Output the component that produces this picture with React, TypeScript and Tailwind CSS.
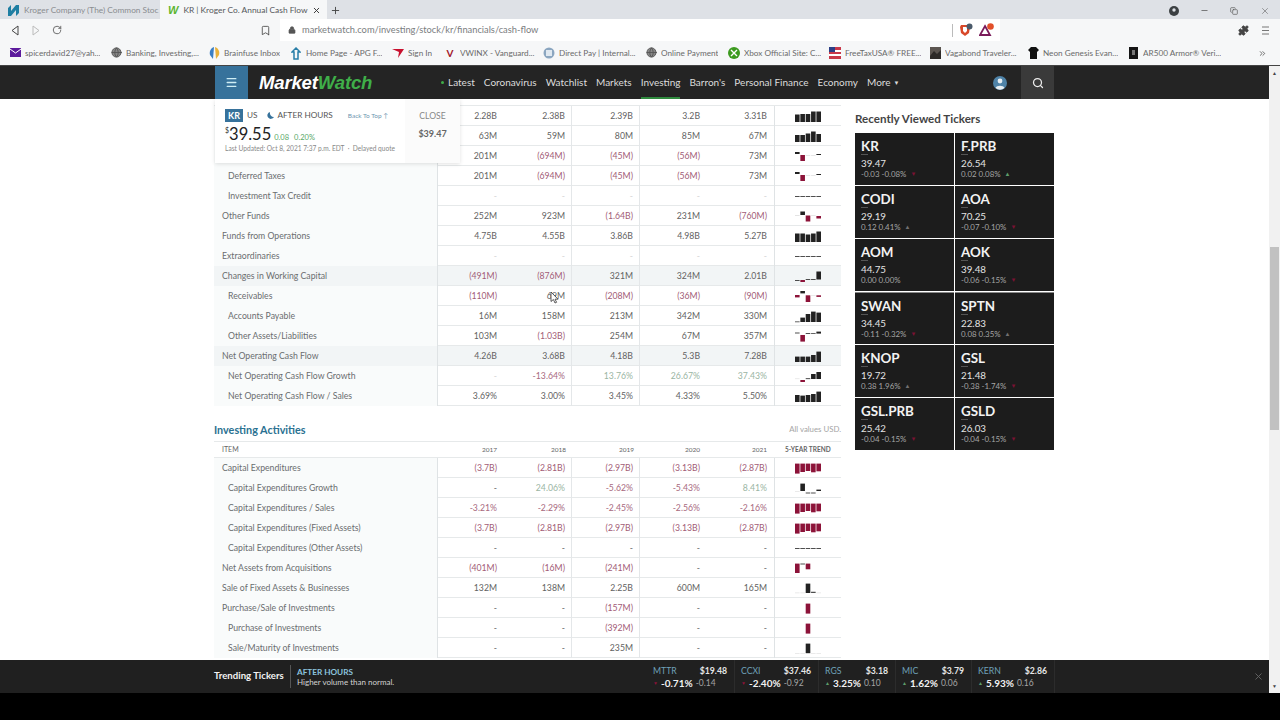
import { Menu, Search, Plus, X, Minus, RotateCw, Bookmark, Lock, Puzzle, Copy, Globe, ChevronsRight } from "lucide-react";

type Bar = [number, number, string?] | null;
const k = "#222222", r = "#8c1339", p = "#dcdcdc";
const dash: Bar[] = [[10, 0.8], [10, 0.8], [10, 0.8], [10, 0.8], [10, 0.8]];

function Spark({ bars }: { bars: Bar[] }) {
  return (
    <svg width="28" height="20" viewBox="0 0 28 20" className="block">
      {bars.map((b, i) => (b ? <rect key={i} x={i * 5.35} y={b[0]} width={4.6} height={b[1]} fill={b[2] ?? k} /> : null))}
    </svg>
  );
}

type Row = { l: string; i?: boolean; hl?: boolean; v: string[]; s: Bar[]; g?: number[] };

const table1: Row[] = [
  { l: "", v: ["2.28B", "2.38B", "2.39B", "3.2B", "3.31B"], s: [[8.5, 7.5], [8, 8], [8, 8], [5.5, 10.5], [5.5, 10.5]] },
  { l: "", v: ["63M", "59M", "80M", "85M", "67M"], s: [[9, 7], [9, 7], [7.5, 8.5], [5.5, 10.5], [8, 8]] },
  { l: "", v: ["201M", "(694M)", "(45M)", "(56M)", "73M"], s: [[6, 2], [9, 6, r], [9, 0.7, p], [9, 0.7, p], [8, 1]] },
  { l: "Deferred Taxes", i: true, v: ["201M", "(694M)", "(45M)", "(56M)", "73M"], s: [[6, 2], [9, 6, r], [9, 0.7, p], [9, 0.7, p], [8, 1]] },
  { l: "Investment Tax Credit", i: true, v: ["-", "-", "-", "-", "-"], s: dash },
  { l: "Other Funds", v: ["252M", "923M", "(1.64B)", "231M", "(760M)"], s: [[9, 0.8, p], [5.5, 3.5], [9.5, 6, r], [9, 0.7, p], [10, 2.5, r]] },
  { l: "Funds from Operations", v: ["4.75B", "4.55B", "3.86B", "4.98B", "5.27B"], s: [[7.5, 8.5], [7.5, 8.5], [8.5, 7.5], [7.5, 8.5], [5.5, 10.5]] },
  { l: "Extraordinaries", v: ["-", "-", "-", "-", "-"], s: dash },
  { l: "Changes in Working Capital", hl: true, v: ["(491M)", "(876M)", "321M", "324M", "2.01B"], s: [[14, 0.8], [14, 2, r], [13, 0.8], [13, 0.8], [5.5, 8]] },
  { l: "Receivables", i: true, v: ["(110M)", "69M", "(208M)", "(36M)", "(90M)"], s: [[9, 2.4, r], [5, 2.4], [9.3, 6.7, r], [9, 0.6, p], [9.3, 1.6, r]] },
  { l: "Accounts Payable", i: true, v: ["16M", "158M", "213M", "342M", "330M"], s: [[15.5, 0.7], [11.6, 4.4], [8, 8], [5.6, 10.4], [6.6, 9.4]] },
  { l: "Other Assets/Liabilities", i: true, v: ["103M", "(1.03B)", "254M", "67M", "357M"], s: [[6.6, 0.8], [9, 6.6, r], [7, 0.8], [7.2, 0.7], [5.6, 2]] },
  { l: "Net Operating Cash Flow", hl: true, v: ["4.26B", "3.68B", "4.18B", "5.3B", "7.28B"], s: [[10.6, 5.4], [10.6, 5.4], [10.6, 5.4], [9, 7], [5.6, 10.4]] },
  { l: "Net Operating Cash Flow Growth", i: true, v: ["-", "-13.64%", "13.76%", "26.67%", "37.43%"], s: [[12.5, 0.6, p], [14, 2, r], [12.3, 0.8], [8, 5], [6, 7]], g: [2, 3, 4] },
  { l: "Net Operating Cash Flow / Sales", i: true, v: ["3.69%", "3.00%", "3.45%", "4.33%", "5.50%"], s: [[9, 7], [9.6, 6.4], [9, 7], [8, 8], [5.6, 10.4]] },
];

const capex: Bar[] = [[5.6, 10, r], [5.6, 8.4, r], [5.6, 7.4, r], [5.6, 8.7, r], [5.6, 7.7, r]];
const table2: Row[] = [
  { l: "Capital Expenditures", v: ["(3.7B)", "(2.81B)", "(2.97B)", "(3.13B)", "(2.87B)"], s: capex },
  { l: "Capital Expenditures Growth", i: true, v: ["-", "24.06%", "-5.62%", "-5.43%", "8.41%"], s: [[13, 0.6, p], [5.6, 7.4], [14.6, 0.8], [14.6, 0.8], [11.6, 1.4]], g: [1, 4] },
  { l: "Capital Expenditures / Sales", i: true, v: ["-3.21%", "-2.29%", "-2.45%", "-2.56%", "-2.16%"], s: capex },
  { l: "Capital Expenditures (Fixed Assets)", i: true, v: ["(3.7B)", "(2.81B)", "(2.97B)", "(3.13B)", "(2.87B)"], s: capex },
  { l: "Capital Expenditures (Other Assets)", i: true, v: ["-", "-", "-", "-", "-"], s: dash },
  { l: "Net Assets from Acquisitions", v: ["(401M)", "(16M)", "(241M)", "-", "-"], s: [[5.6, 9.4, r], [5.6, 0.8], [5.6, 5.7, r], null, null] },
  { l: "Sale of Fixed Assets & Businesses", v: ["132M", "138M", "2.25B", "600M", "165M"], s: [[14.6, 0.6, p], [14.6, 0.6, p], [5.6, 9.4], [13.8, 1], [14.6, 0.6, p]] },
  { l: "Purchase/Sale of Investments", v: ["-", "-", "(157M)", "-", "-"], s: [null, null, [5.6, 10, r], null, null] },
  { l: "Purchase of Investments", i: true, v: ["-", "-", "(392M)", "-", "-"], s: [null, null, [5.6, 10, r], null, null] },
  { l: "Sale/Maturity of Investments", i: true, v: ["-", "-", "235M", "-", "-"], s: [[15, 0.6, p], [15, 0.6, p], [5.6, 9.6], [15, 0.6, p], [15, 0.6, p]] },
];

function DataRow({ row, faint }: { row: Row; faint?: boolean }) {
  return (
    <div className={`grid h-5 grid-cols-[224px_66px_68px_68px_67px_68px_66px] border-b border-[#e6e9ea] text-[8.7px] leading-[20px] ${row.hl ? "bg-[#f2f5f6]" : ""}`}>
      <div className={`truncate border-r border-[#dfe3e5] text-[#6a6d6f] ${row.i ? "pl-[14px]" : "pl-2"} ${row.hl ? "bg-[#f2f5f6]" : "bg-[#f9fbfb]"}`}>{row.l}</div>
      {row.v.map((v, i) => {
        const neg = v.startsWith("(");
        const green = row.g?.includes(i);
        const isDash = v === "-";
        const color = isDash ? (faint ? "text-[#d4d4d4]" : "text-[#666666]") : neg ? "text-[#a25c76]" : green ? "text-[#9ab5a3]" : v.startsWith("-") ? "text-[#a86a80]" : "text-[#626262]";
        const pad = i === 1 || i === 2 ? "pr-[6px] border-r border-[#e4e7e9]" : i === 4 ? "pr-[7px] border-r border-[#dfe3e5]" : "pr-[7px]";
        return <div key={i} className={`text-right ${color} ${pad}`}>{v}</div>;
      })}
      <div className="pl-[20px]">
        <Spark bars={row.s} />
      </div>
    </div>
  );
}

const tickers = [
  ["KR", "39.47", "-0.03 -0.08%", 0], ["F.PRB", "26.54", "0.02 0.08%", 1],
  ["CODI", "29.19", "0.12 0.41%", 2], ["AOA", "70.25", "-0.07 -0.10%", 0],
  ["AOM", "44.75", "0.00 0.00%", 3], ["AOK", "39.48", "-0.06 -0.15%", 0],
  ["SWAN", "34.45", "-0.11 -0.32%", 0], ["SPTN", "22.83", "0.08 0.35%", 2],
  ["KNOP", "19.72", "0.38 1.96%", 2], ["GSL", "21.48", "-0.38 -1.74%", 0],
  ["GSL.PRB", "25.42", "-0.04 -0.15%", 0], ["GSLD", "26.03", "-0.04 -0.15%", 0],
] as const;

const trend = [
  { w: "w-[88px]", s: "MTTR", p: "$19.48", c: "-0.71%", d: "-0.14", up: false },
  { w: "w-[84px]", s: "CCXI", p: "$37.46", c: "-2.40%", d: "-0.92", up: false },
  { w: "w-[77px]", s: "RGS", p: "$3.18", c: "3.25%", d: "0.10", up: true },
  { w: "w-[76px]", s: "MIC", p: "$3.79", c: "1.62%", d: "0.06", up: true },
  { w: "w-[83px]", s: "KERN", p: "$2.86", c: "5.93%", d: "0.16", up: true },
];

const marks = [
  { w: "w-[101px]", t: "spicerdavid27@yah...", i: <svg width="11" height="9" viewBox="0 0 11 9"><rect width="11" height="9" fill="#5c1a9c" /><path d="M0 1l5.5 4L11 1" stroke="#fff" fill="none" /></svg> },
  { w: "w-[98px]", t: "Banking, Investing,...", i: <Globe size={11} color="#555" fill="#888" /> },
  { w: "w-[82px]", t: "Brainfuse Inbox", i: <svg width="11" height="13" viewBox="0 0 11 13"><path d="M5 0C2 1 0 4 1 8l3 4z" fill="#3b7fc4" /><path d="M6 0c3 1 5 4 4 8l-3 4z" fill="#e9b23c" /></svg> },
  { w: "w-[102px]", t: "Home Page - APG F...", i: <svg width="10" height="13" viewBox="0 0 10 13"><path d="M5 1L1 5h2v7h4V5h2z" fill="none" stroke="#2a7fa8" strokeWidth="1.5" /></svg> },
  { w: "w-[52px]", t: "Sign In", i: <svg width="12" height="10" viewBox="0 0 12 10"><path d="M0 1h12L6 10l1-6z" fill="#c8102e" /></svg> },
  { w: "w-[99px]", t: "VWINX - Vanguard...", i: <span className="text-[10px] font-bold text-[#a3182c]">V</span> },
  { w: "w-[102px]", t: "Direct Pay | Internal...", i: <svg width="12" height="12" viewBox="0 0 12 12"><circle cx="6" cy="6" r="5.5" fill="#8ba6c0" /><rect x="3" y="3" width="6" height="6" fill="#dfe8f0" /></svg> },
  { w: "w-[83px]", t: "Online Payment", i: <Globe size={11} color="#555" fill="#888" /> },
  { w: "w-[101px]", t: "Xbox Official Site: C...", i: <svg width="12" height="12" viewBox="0 0 12 12"><circle cx="6" cy="6" r="6" fill="#3c9a1f" /><path d="M3 3l6 6M9 3l-6 6" stroke="#fff" strokeWidth="1.4" /></svg> },
  { w: "w-[100px]", t: "FreeTaxUSA® FREE...", i: <svg width="12" height="12" viewBox="0 0 12 12"><rect width="12" height="12" fill="#c8384a" /><rect y="3" width="12" height="2" fill="#fff" /><rect y="7" width="12" height="2" fill="#fff" /><rect width="6" height="5" fill="#2b3f86" /></svg> },
  { w: "w-[98px]", t: "Vagabond Traveler...", i: <svg width="11" height="12" viewBox="0 0 11 12"><rect width="11" height="12" fill="#5b5550" /><path d="M0 9l4-5 3 3 4-4v9H0z" fill="#2d2a28" /></svg> },
  { w: "w-[100px]", t: "Neon Genesis Evan...", i: <svg width="11" height="12" viewBox="0 0 11 12"><path d="M3 0h5l3 3-2 2v7H2V5L0 3z" fill="#111" /></svg> },
  { w: "w-[131px]", t: "AR500 Armor® Veri...", i: <svg width="9" height="12" viewBox="0 0 9 12"><rect width="9" height="12" fill="#151515" /><rect x="3" y="3" width="3" height="5" fill="#777" /></svg> },
];

const nav = ["Coronavirus", "Watchlist", "Markets", "Investing", "Barron's", "Personal Finance", "Economy"];

export default function App() {
  return (
    <div className="flex h-[720px] w-[1280px] flex-col overflow-hidden bg-black font-['Lato',sans-serif]">
      {/* tabs */}
      <div className="flex h-[19px] items-stretch bg-[#dee1e6]">
        <div className="flex w-[160px] items-center gap-[5px] pl-[8px] pt-[2px] text-[#8a8d90]">
          <svg width="11" height="11" viewBox="0 0 11 11" className="shrink-0"><path d="M0 11V3l3-3v6l5-6h3v8l-3 3V5l-5 6z" fill="#1f7fa3" /></svg>
          <span className="whitespace-nowrap text-[8.3px]">Kroger Company (The) Common Stoc</span>
        </div>
        <div className="flex w-[167px] items-center gap-[5px] bg-[#f6f7f8] pl-[8px] pt-[2px] text-[#55585b]">
          <span className="font-['Liberation_Sans',sans-serif] text-[11px] font-bold italic leading-none text-[#5cb531]">W</span>
          <span className="w-[124px] whitespace-nowrap text-[8.4px]">KR | Kroger Co. Annual Cash Flow</span>
          <X size={9} color="#333" strokeWidth={2.5} />
        </div>
        <div className="flex w-[16px] items-center pl-[3px] pt-[2px]"><Plus size={11} color="#444" /></div>
        <div className="flex-1" />
        <div className="flex items-center pr-[10px] pt-[2px] text-[#555]">
          <svg width="10" height="10" viewBox="0 0 10 10" className="mr-[21px]"><circle cx="5" cy="5" r="5" fill="#3c4043" /><circle cx="5" cy="4" r="1.7" fill="#dee1e6" /></svg>
          <Minus size={9} className="mr-[21px]" />
          <Copy size={8} className="mr-[22px]" />
          <X size={10} strokeWidth={1.3} />
        </div>
      </div>
      {/* toolbar */}
      <div className="flex h-[22px] items-center bg-[#f6f7f8]">
        <div className="flex w-[280px] items-center pl-[10px] text-[#555]">
          <svg width="10" height="11" viewBox="0 0 10 11" className="mr-[11px]"><path d="M8 1L2 5.5 8 10z" fill="none" stroke="#444" /></svg>
          <svg width="10" height="11" viewBox="0 0 10 11" className="mr-[11px]"><path d="M2 1l6 4.5L2 10z" fill="none" stroke="#bbb" /></svg>
          <RotateCw size={10} />
          <Bookmark size={11} className="ml-[198px]" />
        </div>
        <div className="flex h-[22px] w-[720px] items-center bg-white pl-[8px] text-[#7a7d80]">
          <Lock size={8} fill="#555" color="#555" className="mr-[6px]" />
          <span className="text-[9.3px]">marketwatch.com/investing/stock/kr/financials/cash-flow</span>
          <div className="flex-1" />
          <div className="h-[13px] w-px bg-[#bbb]" />
          <svg width="14" height="14" viewBox="0 0 14 14" className="ml-[6px]"><path d="M2 2h8l1 2-1 6-4 3-4-3-1-6z" fill="#d8482a" /><path d="M4 4h4v4L6 10 4 8z" fill="#fff" /><circle cx="10.5" cy="3.5" r="3" fill="#4a5a6a" /></svg>
          <svg width="16" height="14" viewBox="0 0 16 14" className="ml-[6px] mr-[5px]"><path d="M6 3l5 9H1z" fill="none" stroke="#7a1a5a" strokeWidth="1.8" /><circle cx="11.5" cy="3.5" r="3.3" fill="#e2502a" /></svg>
        </div>
        <div className="flex flex-1 items-center justify-end gap-[13px] pr-[11px] text-[#555]">
          <Puzzle size={11} fill="#444" color="#444" />
          <svg width="7" height="9" viewBox="0 0 7 9"><path d="M0 1h7M0 4.5h7M0 8h7" stroke="#777" strokeWidth="1" /></svg>
        </div>
      </div>
      {/* bookmarks */}
      <div className="flex h-[25px] items-center border-b border-[#444] bg-[#f6f7f8] pl-[9px] text-[8.2px] text-[#6a6a6a]">
        {marks.map((m) => (
          <div key={m.t} className={`flex shrink-0 items-center gap-[4px] ${m.w}`}>
            <span className="flex w-[12px] justify-center">{m.i}</span>
            <span className="truncate">{m.t}</span>
          </div>
        ))}
        <ChevronsRight size={9} color="#444" />
      </div>
      {/* page + scrollbar */}
      <div className="flex h-[627px]">
        <div className="flex w-[1269px] flex-col">
          <header className="flex h-[33px] shrink-0 items-stretch bg-[#242424] pl-[215px]">
            <div className="flex w-[33px] items-center justify-center bg-[#37729b]"><Menu size={13} color="#cfeef5" strokeWidth={2.4} /></div>
            <div className="ml-[11px] flex w-[182px] items-center font-['Liberation_Sans',sans-serif] text-[18.6px] font-bold italic tracking-[-0.2px] text-white">
              Market<span className="text-[#3fae49]">Watch</span>
            </div>
            <div className="flex items-center gap-[9px] text-[10px] text-[#dcdcdc]">
              <span className="flex items-center gap-[4px]"><span className="h-[3px] w-[3px] rounded-full bg-[#3fae49]" />Latest</span>
              {nav.map((n) => (
                <span key={n} className={`flex h-full items-center ${n === "Investing" ? "border-y-[2px] border-t-transparent border-b-[#2f8a3e]" : ""}`}>{n}</span>
              ))}
              <span className="flex items-center gap-[3px]">More<span className="text-[6px]">▼</span></span>
            </div>
            <div className="flex-1" />
            <div className="mr-[14px] flex items-center">
              <svg width="14" height="14" viewBox="0 0 14 14"><circle cx="7" cy="7" r="7" fill="#4f83a8" /><circle cx="7" cy="5" r="2.4" fill="#e8eef2" /><path d="M2.5 12c1-3 8-3 9 0a7 7 0 0 1-9 0z" fill="#e8eef2" /></svg>
            </div>
            <div className="mr-[215px] flex w-[33px] items-center justify-center bg-[#3a3a3a]"><Search size={12} color="#eee" strokeWidth={2.5} /></div>
          </header>
          <main className="relative flex flex-1 overflow-hidden bg-white pl-[214px]">
            <div className="w-[627px] shrink-0">
              <div className="h-[7px] border-b border-[#e6e9ea]" />
              {table1.map((row, i) => <DataRow key={i} row={row} faint />)}
              <div className="mt-[13px] flex h-[22px] items-center justify-between">
                <span className="text-[10.8px] font-bold text-[#2a7191]">Investing Activities</span>
                <span className="text-[7.8px] text-[#a5a5a5]">All values USD.</span>
              </div>
              <div className="grid h-[17px] grid-cols-[224px_66px_68px_68px_67px_68px_66px] border-y border-[#e6e9ea] text-[6.5px] leading-[15px] text-[#666]">
                <div className="pl-2 text-[7px]">ITEM</div>
                <div className="pr-[7px] text-right">2017</div>
                <div className="pr-[6px] text-right">2018</div>
                <div className="pr-[6px] text-right">2019</div>
                <div className="pr-[7px] text-right">2020</div>
                <div className="pr-[8px] text-right">2021</div>
                <div className="pl-[10px] font-bold whitespace-nowrap">5-YEAR TREND</div>
              </div>
              {table2.map((row, i) => <DataRow key={i} row={row} />)}
            </div>
            <aside className="ml-[14px] w-[199px] shrink-0 pt-[13px]">
              <h3 className="h-[21px] text-[11.6px] font-bold leading-[13px] text-[#444]">Recently Viewed Tickers</h3>
              <div className="grid grid-cols-2 gap-[1px]">
                {tickers.map(([s, pr, c, d], i) => (
                  <div key={s} className={`h-[52px] bg-[#1c1c1c] pl-[6px] pt-[6px] ${i === 6 || i === 7 ? "border-t border-[#888]" : ""}`}>
                    <div className="text-[13.4px] font-bold leading-[15px] text-[#f2f2f2]">{s}</div>
                    <div className="h-px w-[7px] bg-[#555]" />
                    <div className="mt-[3px] text-[9.8px] leading-[11px] text-[#e4e4e4]">{pr}</div>
                    <div className="flex items-center gap-[4px] text-[7.9px] leading-[10px] text-[#a5a5a5]">
                      {c}
                      {d === 0 && <span className="text-[6px] text-[#7a1233]">▼</span>}
                      {d === 1 && <span className="text-[6px] text-[#5d9c6a]">▲</span>}
                      {d === 2 && <span className="text-[6px] text-[#707070]">▲</span>}
                    </div>
                  </div>
                ))}
              </div>
            </aside>
            {/* sticky quote overlay */}
            <div className="absolute left-[215px] top-0 flex h-[64px] shadow-[0_1px_4px_rgba(0,0,0,0.12)]">
              <div className="w-[190px] bg-white pl-[10px] pt-[10px]">
                <div className="flex items-center text-[8.2px] leading-[13px] text-[#555]">
                  <span className="bg-[#37729b] px-[3px] text-[9px] font-bold text-white">KR</span>
                  <span className="ml-[4px]">US</span>
                  <svg width="7" height="7" viewBox="0 0 7 7" className="ml-[10px]"><path d="M3 0a3.5 3.5 0 1 0 4 5A4 4 0 0 1 3 0z" fill="#37729b" /></svg>
                  <span className="ml-[3px]">AFTER HOURS</span>
                  <span className="ml-[15px] whitespace-nowrap text-[6.5px] text-[#6f97b0]">Back To Top ↑</span>
                </div>
                <div className="mt-[3px] flex items-baseline">
                  <span className="self-start text-[7px] text-[#333]">$</span>
                  <span className="text-[16.5px] leading-[18px] text-[#222]">39.55</span>
                  <span className="ml-[3px] text-[7.5px] text-[#5aa868]">0.08</span>
                  <span className="ml-[5px] text-[7.5px] text-[#5aa868]">0.20%</span>
                </div>
                <div className="mt-[1px] whitespace-nowrap text-[6.6px] text-[#888]">Last Updated: Oct 8, 2021 7:37 p.m. EDT &nbsp;·&nbsp; Delayed quote</div>
              </div>
              <div className="w-[55px] bg-[#fbfbfb] pt-[11px] text-center">
                <div className="text-[8.6px] leading-[12px] text-[#888]">CLOSE</div>
                <div className="mt-[5px] text-[9px] font-bold text-[#666]">$39.47</div>
              </div>
            </div>
            {/* mouse pointer */}
            <svg width="9" height="13" viewBox="0 0 9 13" className="absolute left-[550px] top-[192px]"><path d="M1 1v9.5l2.4-2 1.6 3.5 1.6-.7L5 8.2h3z" fill="#fff" stroke="#333" strokeWidth="0.8" /></svg>
          </main>
          <footer className="flex h-[33px] shrink-0 items-center bg-[#202020] pl-[214px]">
            <div className="w-[76px] whitespace-nowrap text-[9.6px] font-bold text-[#f2f2f2]">Trending Tickers</div>
            <div className="h-[23px] w-px bg-[#555]" />
            <div className="ml-[6px] w-[350px] leading-[10px]">
              <div className="text-[8.2px] font-bold text-[#8cc3de]">AFTER HOURS</div>
              <div className="text-[8px] text-[#d2d2d2]">Higher volume than normal.</div>
            </div>
            {trend.map((t) => (
              <div key={t.s} className={`${t.w} h-full border-r border-[#2c2c2c] pl-[6px] pr-[7px] pt-[5px]`}>
                <div className="flex justify-between text-[8.7px] leading-[12px]">
                  <span className="text-[#6fa0b8]">{t.s}</span>
                  <span className="font-bold text-[#e6e6e6]">{t.p}</span>
                </div>
                <div className="flex items-center whitespace-nowrap leading-[13px]">
                  <span className={`mr-[3px] text-[5px] ${t.up ? "text-[#5d9c6a]" : "text-[#8c1339]"}`}>{t.up ? "▲" : "▼"}</span>
                  <span className="mr-[3px] text-[10px] font-bold text-[#f2f2f2]">{t.c}</span>
                  <span className="text-[8.5px] text-[#a5a5a5]">{t.d}</span>
                </div>
              </div>
            ))}
            <div className="flex-1" />
            <X size={11} color="#666" className="mr-[5px]" />
          </footer>
        </div>
        <div className="flex w-[11px] flex-col items-center bg-[#f1f1f1] text-[5px] text-[#444]">
          <span className="mt-[3px] leading-[8px]">▲</span>
          <div className="mt-[170px] h-[183px] w-[9px] shrink-0 bg-[#c1c1c1]" />
          <div className="flex-1" />
          <span className="mb-[3px] leading-[8px]">▼</span>
        </div>
      </div>
      <div className="flex-1 bg-black" />
    </div>
  );
}
